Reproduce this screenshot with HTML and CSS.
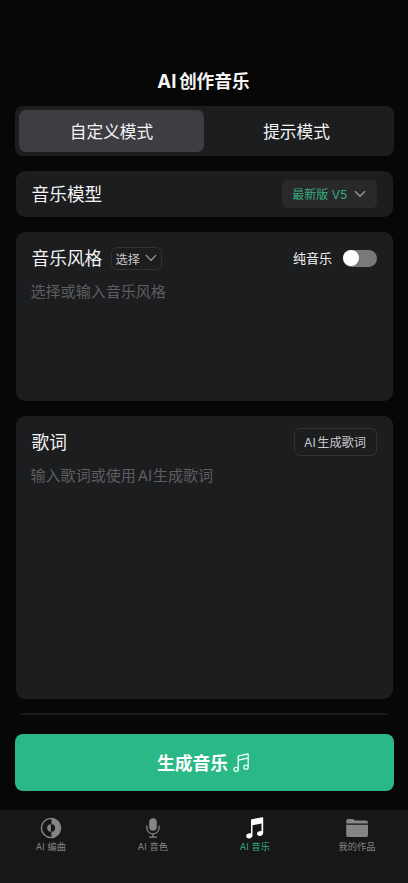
FILE: index.html
```html
<!DOCTYPE html>
<html lang="zh-CN">
<head>
<meta charset="utf-8">
<meta name="viewport" content="width=device-width, initial-scale=1">
<title>AI创作音乐</title>
<link rel="stylesheet" href="styles.css">
</head>
<body>
<main class="screen">
  <h1 class="title"><span class="latin">AI</span>创作音乐</h1>
  <div class="content">
    <div class="modes">
      <button class="mode mode-active">自定义模式</button>
      <button class="mode">提示模式</button>
    </div>
    <section class="card card-model">
      <h2>音乐模型</h2>
      <button class="model-select"><span>最新版 V5</span>
        <svg width="12" height="8" viewBox="0 0 12 8"><path d="M1.3 1.5 6 6.2l4.7-4.7"/></svg>
      </button>
    </section>
    <section class="card card-style">
      <div class="card-head">
        <h2>音乐风格</h2>
        <button class="outline pick"><span>选择</span>
          <svg width="12" height="8" viewBox="0 0 12 8"><path d="M1.2 1.4 6 6.2l4.8-4.8"/></svg>
        </button>
        <span class="switch-label">纯音乐</span>
        <span class="switch"></span>
      </div>
      <p class="placeholder">选择或输入音乐风格</p>
    </section>
    <section class="card card-lyrics">
      <div class="card-head">
        <h2>歌词</h2>
        <button class="outline generate-lyrics"><span class="latin">AI</span>生成歌词</button>
      </div>
      <p class="placeholder">输入歌词或使用<span class="latin latin-mid">AI</span>生成歌词</p>
    </section>
    <section class="card card-next"></section>
  </div>
  <button class="submit"><span>生成音乐</span>
    <svg width="17" height="20" viewBox="0 0 17 20"><path d="M5.2 16.2V3.6Q5.2 3 5.8 2.8L14.6 1q.6-.1.6.5v12.3M5.2 7.1l10-2.1"/><ellipse cx="3.1" cy="16.4" rx="2.2" ry="2"/><ellipse cx="13" cy="14.2" rx="2.2" ry="2"/></svg>
  </button>
  <nav class="tabbar">
    <a class="tab">
      <svg width="22" height="22" viewBox="0 0 22 22"><circle cx="11" cy="11" r="9.6" fill="none" stroke="currentColor" stroke-width="1.4"/><path fill="currentColor" d="M11.4.9a10.2 10.2 0 0 1 0 20.2v-6.4a3.7 3.7 0 0 0 0-7.4zM10.9 7.3v7.4a3.7 3.7 0 0 1 0-7.4z"/></svg>
      <span>AI 编曲</span>
    </a>
    <a class="tab">
      <svg width="22" height="22" viewBox="0 0 22 22"><rect x="7.2" y="1.2" width="7.6" height="12.6" rx="3.8" fill="currentColor"/><path d="M4.9 9v1.8a6.1 6.1 0 0 0 12.2 0V9M11 17v3M7.5 20.1h7" fill="none" stroke="currentColor" stroke-width="1.3" stroke-linecap="round"/></svg>
      <span>AI 音色</span>
    </a>
    <a class="tab tab-active">
      <svg width="22" height="22" viewBox="0 0 22 22"><path fill="currentColor" d="M7 3.2Q7 2.5 7.7 2.3L18.3.2q.9-.2.9.7v14.9c0 1.8-1.3 3.2-3.4 3.2-1.7 0-2.8-.9-2.8-2.4 0-1.7 1.6-2.7 4-2.7h.5V6.4L8.5 8.3v9.9c0 1.9-1.4 3.2-3.4 3.2-1.8 0-2.9-1-2.9-2.4 0-1.6 1.5-2.7 3.8-2.7H7z"/></svg>
      <span>AI 音乐</span>
    </a>
    <a class="tab">
      <svg width="24" height="22" viewBox="0 0 24 22"><path fill="currentColor" d="M1.2 6.5V4Q1.2 2 3.2 2h4.3q.8 0 1.4.6l.5.4q.5.4 1.2.4h10.2q2.2 0 2.2 2v1.1zM1.2 7.8H23v10.1q0 2.2-2.2 2.2H3.4q-2.2 0-2.2-2.2z"/></svg>
      <span>我的作品</span>
    </a>
  </nav>
</main>
</body>
</html>
```
FILE: styles.css
```css
* {
  box-sizing: border-box;
}

body {
  margin: 0;
  background: #070707;
  color: #f4f4f5;
  font-family: Inter, "Noto Sans CJK SC", sans-serif;
}

h1, h2, p {
  margin: 0;
  font-weight: 400;
}

button {
  display: flex;
  align-items: center;
  justify-content: center;
  margin: 0;
  padding: 0;
  border: 0;
  background: none;
  color: inherit;
  font: inherit;
  white-space: nowrap;
}

svg {
  display: block;
  flex: none;
}

.screen {
  display: flex;
  flex-direction: column;
  height: 883px;
  overflow: hidden;
}

.title {
  display: flex;
  justify-content: center;
  flex: none;
  height: 38.5px;
  margin-top: 67px;
  padding-right: 1px;
  font-size: 17.7px;
  font-weight: 700;
  line-height: 29px;
}

.title .latin {
  font-size: 18.6px;
}

.latin {
  margin-right: 0.13em;
}

.latin-mid {
  margin-left: 0.12em;
  margin-right: 0.06em;
}

.content {
  flex: none;
  height: 609.5px;
  padding: 0 15.5px;
  overflow: hidden;
}

.modes {
  display: flex;
  height: 50.5px;
  margin: 0 -1px 14.5px;
  padding: 4.5px;
  border-radius: 8px;
  background: #1c1d1f;
}

.mode {
  flex: 1;
  border-radius: 7px;
  font-size: 16.7px;
}

.mode-active {
  background: #3e3d41;
}

.card {
  margin-bottom: 14.5px;
  padding: 0 16px;
  border-radius: 9px;
  background: #1c1d1f;
}

.card h2 {
  padding-top: 2px;
  font-size: 17.7px;
  line-height: 26px;
}

.card-model {
  display: flex;
  align-items: center;
  justify-content: space-between;
  height: 46.5px;
}

.model-select {
  gap: 7px;
  width: 94.5px;
  height: 28px;
  border-radius: 5px;
  background: #29292b;
  color: #36ad80;
  font-size: 12px;
}

.model-select svg,
.pick svg {
  fill: none;
  stroke: #97979a;
  stroke-width: 1.3;
  stroke-linecap: round;
  stroke-linejoin: round;
}

.card-style {
  height: 169.5px;
  padding-top: 11.5px;
}

.card-lyrics {
  height: 283px;
  padding-top: 11.5px;
}

.card-next {
  height: 60px;
}

.card-head {
  display: flex;
  align-items: center;
  height: 30px;
}

.outline {
  border: 1px solid #303133;
  border-radius: 6px;
  color: #c9c9cb;
  font-size: 12.2px;
}

.pick {
  gap: 5px;
  width: 51px;
  height: 23px;
  margin-left: 8.5px;
}

.pick span {
  padding-top: 1px;
}

.switch-label {
  margin-left: auto;
  padding-bottom: 1px;
  font-size: 13px;
}

.switch {
  display: flex;
  width: 34px;
  height: 17px;
  margin-left: 10.5px;
  padding: 0.5px;
  border-radius: 9px;
  background: #79797b;
}

.switch::before {
  content: "";
  width: 16px;
  height: 16px;
  border-radius: 50%;
  background: #fff;
}

.generate-lyrics {
  width: 83px;
  height: 28px;
  margin-left: auto;
}

.placeholder {
  margin: 6.5px 0 0 -1px;
  color: #5d5e60;
  font-size: 15.05px;
  line-height: 23px;
}

.submit {
  flex: none;
  gap: 5px;
  height: 57px;
  margin: 19px 14.5px 18.5px;
  border-radius: 8px;
  background: #2ab887;
  color: #fff;
  font-size: 17.8px;
  font-weight: 700;
}

.submit span {
  padding-bottom: 2px;
}

.submit svg {
  margin-right: 1px;
  fill: none;
  stroke: #e9fff6;
  stroke-width: 1.3;
  stroke-linejoin: round;
}

.tabbar {
  display: flex;
  flex: 1;
  background: #171717;
}

.tab {
  display: flex;
  flex: 1;
  flex-direction: column;
  align-items: center;
  padding-top: 7px;
  color: #858585;
  font-size: 9.2px;
  line-height: 14px;
}

.tab span {
  margin-top: 1.5px;
  letter-spacing: 0.1px;
  white-space: nowrap;
}

.tab-active svg {
  color: #fff;
}

.tab-active span {
  color: #2fae82;
}
```
